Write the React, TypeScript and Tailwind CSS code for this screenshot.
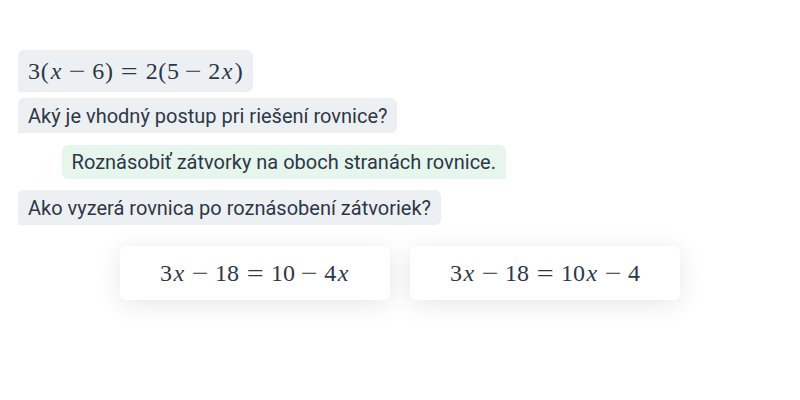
import React from 'react';

type Tok = { t: string; k?: 'var' | 'bin' | 'rel' | 'paren' };

const parse = (s: string): Tok[] =>
  s.split('').filter((c) => c !== ' ').map((c) => {
    if (c === 'x') return { t: c, k: 'var' };
    if (c === '-') return { t: '\u2212', k: 'bin' };
    if (c === '=') return { t: c, k: 'rel' };
    if (c === '(' || c === ')') return { t: c, k: 'paren' };
    return { t: c };
  });

// widths roughly follow KaTeX's metrics so the equations take the same room
function MathText({ expr, className }: { expr: string; className?: string }) {
  return (
    <span className={`font-['Liberation_Serif','Times_New_Roman',serif] whitespace-nowrap ${className ?? ''}`}>
      {parse(expr).map((tok, i) => {
        if (tok.k === 'var') return <i key={i} className="inline-block w-[0.572em] text-center">{tok.t}</i>;
        if (tok.k === 'bin')
          return <span key={i} className="inline-block w-[0.778em] mx-[0.222em] text-center scale-x-125">{tok.t}</span>;
        if (tok.k === 'rel')
          return <span key={i} className="inline-block w-[0.778em] mx-[0.278em] text-center scale-x-125">{tok.t}</span>;
        if (tok.k === 'paren') return <span key={i} className="inline-block w-[0.389em] text-center">{tok.t}</span>;
        return <span key={i}>{tok.t}</span>;
      })}
    </span>
  );
}

const answers = ['3x - 18 = 10 - 4x', '3x - 18 = 10x - 4'];

export default function App() {
  return (
    <div className="w-[800px] h-[400px] bg-white text-[#2d3748] font-['Roboto','Liberation_Sans',sans-serif]">
      <div className="pt-[50px] pl-[18px] w-[506px] flex flex-col items-start">
        <div className="bg-[#edf0f2] rounded-md rounded-bl-none px-[10px] h-[42px] flex items-center">
          <MathText expr="3(x - 6) = 2(5 - 2x)" className="text-[24px]" />
        </div>
        <div className="mt-[6px] bg-[#edf0f2] rounded-md rounded-bl-none px-[10px] h-[35px] flex items-center text-[20px]">
          Aký je vhodný postup pri riešení rovnice?
        </div>
        <div className="mt-[12px] self-end bg-[#e6f6ed] rounded-md rounded-br-none px-[10px] h-[34px] flex items-center text-[20px]">
          Roznásobiť zátvorky na oboch stranách rovnice.
        </div>
        <div className="mt-[11px] bg-[#edf0f2] rounded-md rounded-bl-none px-[10px] h-[35px] flex items-center text-[20px]">
          Ako vyzerá rovnica po roznásobení zátvoriek?
        </div>
      </div>
      <div className="mt-[21px] flex justify-center gap-5">
        {answers.map((a) => (
          <div
            key={a}
            className="w-[270px] h-[54px] bg-white rounded-md shadow-[0_4px_24px_rgba(0,0,0,0.10)] flex items-center justify-center text-[#2d3748]"
          >
            <MathText expr={a} className="text-[24px]" />
          </div>
        ))}
      </div>
    </div>
  );
}
